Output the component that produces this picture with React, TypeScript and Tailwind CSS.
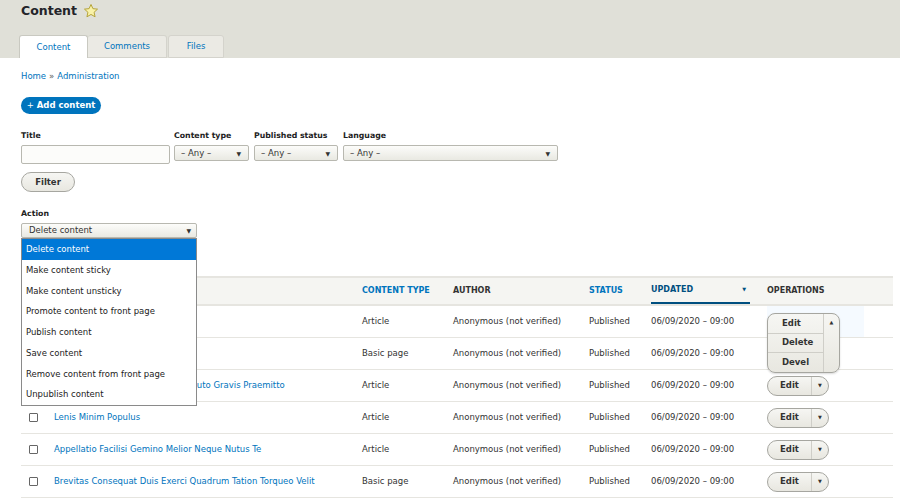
import React from 'react';

const ACTIONS = [
  'Delete content',
  'Make content sticky',
  'Make content unsticky',
  'Promote content to front page',
  'Publish content',
  'Save content',
  'Remove content from front page',
  'Unpublish content',
];

const ROWS = [
  { title: 'Ad Commoveo Minim', type: 'Article', open: true },
  { title: 'Dolor Ideo Pala Sino', type: 'Basic page' },
  { title: 'Conventio Dolus Nisl Quidem Imputo Gravis Praemitto', type: 'Article' },
  { title: 'Lenis Minim Populus', type: 'Article' },
  { title: 'Appellatio Facilisi Gemino Melior Neque Nutus Te', type: 'Article' },
  { title: 'Brevitas Consequat Duis Exerci Quadrum Tation Torqueo Velit', type: 'Basic page' },
];

function Star() {
  return (
    <svg width="16" height="16" viewBox="0 0 24 24" className="ml-[6px]">
      <path
        d="M12 2.2l2.9 6.3 6.9.7-5.2 4.7 1.5 6.8L12 17.2l-6.1 3.5 1.5-6.8-5.2-4.7 6.9-.7z"
        fill="#f9f2a8"
        stroke="#b5a43a"
        strokeWidth="1.5"
        strokeLinejoin="round"
      />
    </svg>
  );
}

function Select({ w, label }: { w: string; label: string }) {
  return (
    <div
      className={`${w} h-[16px] flex items-center justify-between pl-[6px] pr-[7px] border border-[#b8b8b0] rounded-[2px] bg-gradient-to-b from-[#fcfcfa] to-[#e9e9e2] text-[8.5px] text-[#333]`}
    >
      <span>{label}</span>
      <span className="text-[6px] text-[#333]">▼</span>
    </div>
  );
}

function Label({ children }: { children: React.ReactNode }) {
  return <div className="h-[10px] flex items-center text-[7.8px] font-bold text-[#222] mb-[4px]">{children}</div>;
}

export default function App() {
  return (
    <div className="w-[900px] h-[499px] overflow-hidden bg-white relative font-['DejaVu_Sans',sans-serif] text-[#333]">
      {/* page header */}
      <div className="bg-[#e0e0d8] h-[58px] px-[19px] flex flex-col">
        <h1 className="pl-[2px] h-[22px] flex items-center text-[12.5px] font-bold text-[#232429]">
          Content
          <Star />
        </h1>
        <div className="flex mt-auto text-[8.5px] text-[#0074bd]">
          <div className="w-[69px] h-[23px] flex items-center justify-center bg-white border border-b-0 border-[#c9c9c1] rounded-t-[3px]">
            Content
          </div>
          <div className="w-[79px] h-[23px] flex items-center justify-center bg-[#ebeae4] border border-l-0 border-[#d4d3cc] rounded-t-[3px]">
            Comments
          </div>
          <div className="w-[56px] ml-[1px] h-[23px] flex items-center justify-center bg-[#ebeae4] border border-[#d4d3cc] rounded-t-[3px]">
            Files
          </div>
        </div>
      </div>

      <div className="px-[21px]">
        <div className="mt-[12px] h-[12px] flex items-center text-[8.5px] text-[#0074bd]">
          Home <span className="mx-[3px] text-[#555]">»</span> Administration
        </div>

        <button className="mt-[15px] w-[80px] h-[17px] rounded-full bg-[#0074bd] text-white text-[8.5px] font-bold flex items-center justify-center">
          <span className="font-normal mr-[3px]">+</span>Add content
        </button>

        {/* filters */}
        <div className="mt-[17px] flex items-start">
          <div className="mr-[4px]">
            <Label>Title</Label>
            <div className="w-[149px] h-[19px] border border-[#b8b8b0] rounded-[2px] bg-[#fcfcfa]" />
          </div>
          <div className="mr-[5px]">
            <Label>Content type</Label>
            <Select w="w-[75px]" label="– Any –" />
          </div>
          <div className="mr-[5px]">
            <Label>Published status</Label>
            <Select w="w-[84px]" label="– Any –" />
          </div>
          <div>
            <Label>Language</Label>
            <Select w="w-[215px]" label="– Any –" />
          </div>
        </div>

        <button className="mt-[8px] w-[54px] h-[20px] rounded-full border border-[#a6a6a0] bg-gradient-to-b from-[#f6f6f3] to-[#e8e7e0] text-[8.5px] font-bold text-[#333] flex items-center justify-center">
          Filter
        </button>

        {/* action */}
        <div className="mt-[17px]">
          <Label>Action</Label>
          <div className="relative w-[176px]">
            <div className="w-[176px] h-[15px] flex items-center justify-between pl-[7px] pr-[5px] border border-[#b8b8b0] rounded-[2px] bg-gradient-to-b from-[#fcfcfa] to-[#e9e9e2] text-[8.5px] text-[#333]">
              <span>Delete content</span>
              <span className="text-[6px]">▼</span>
            </div>
            <div className="absolute left-0 top-full w-[176px] z-20 bg-white border border-[#8a8a8a] text-[8.5px] text-[#222]">
              {ACTIONS.map((a, i) => (
                <div
                  key={a}
                  className={`h-[20.75px] flex items-center pl-[4px] ${i === 0 ? 'bg-[#0078d7] text-white' : ''}`}
                >
                  {a}
                </div>
              ))}
            </div>
          </div>
        </div>

        {/* table */}
        <table className="mt-[38px] w-[872px] table-fixed border-collapse text-[8.5px]">
          <colgroup>
            <col className="w-[25px]" />
            <col className="w-[308px]" />
            <col className="w-[91px]" />
            <col className="w-[136px]" />
            <col className="w-[62px]" />
            <col className="w-[116px]" />
            <col className="w-[134px]" />
          </colgroup>
          <thead>
            <tr className="h-[28px] bg-[#f5f5f2] border-t-2 border-b-2 border-[#e6e5e0] text-[8px] font-bold text-left">
              <th className="px-[8px]" />
              <th className="px-[8px]" />
              <th className="px-[8px] text-[#0074bd]">CONTENT TYPE</th>
              <th className="px-[8px] text-[#333]">AUTHOR</th>
              <th className="px-[8px] text-[#0074bd]">STATUS</th>
              <th className="px-[8px] h-[28px] p-0">
                <div className="w-[99px] h-[26px] flex items-center justify-between pr-[4px] border-b-2 border-[#004f80] text-[#004f80]">
                  <span>UPDATED</span>
                  <span className="text-[5px]">▼</span>
                </div>
              </th>
              <th className="px-[8px] text-[#333]">OPERATIONS</th>
            </tr>
          </thead>
          <tbody>
            {ROWS.map((r) => (
              <tr key={r.title} className="h-[32px] border-b border-[#e6e5e0]">
                <td className="pl-[8px]">
                  <div className="w-[9px] h-[9px] border border-[#666] rounded-[1px] bg-white" />
                </td>
                <td className="px-[8px] text-[#0074bd] whitespace-nowrap overflow-hidden">{r.title}</td>
                <td className="px-[8px]">{r.type}</td>
                <td className="px-[8px]">Anonymous (not verified)</td>
                <td className="px-[8px]">Published</td>
                <td className="px-[8px]">06/09/2020 – 09:00</td>
                <td className="pl-[8px] relative">
                  {r.open ? (
                    <div className="w-[97px] h-[31px] bg-[#f5faff] relative">
                      <div className="absolute left-0 top-[7px] z-10 w-[73px] flex border border-[#a6a6a0] rounded-[8px] overflow-hidden bg-gradient-to-b from-[#f6f6f3] to-[#e8e7e0] text-[8.5px] font-bold text-[#333] shadow-[0_1px_2px_rgba(0,0,0,0.15)]">
                        <div className="w-[55px] flex flex-col">
                          <div className="h-[19.5px] flex items-center pl-[14px] border-b border-[#cfcec8]">Edit</div>
                          <div className="h-[19.5px] flex items-center pl-[14px] border-b border-[#cfcec8]">Delete</div>
                          <div className="h-[19px] flex items-center pl-[14px]">Devel</div>
                        </div>
                        <div className="flex-1 border-l border-[#cfcec8] flex justify-center pt-[5px] text-[5px] text-[#333]">
                          ▲
                        </div>
                      </div>
                    </div>
                  ) : (
                    <div className="w-[62px] h-[20px] flex border border-[#a6a6a0] rounded-full bg-gradient-to-b from-[#f6f6f3] to-[#e8e7e0] text-[8.5px] font-bold text-[#333]">
                      <div className="w-[43px] flex items-center justify-center">Edit</div>
                      <div className="flex-1 border-l border-[#cfcec8] flex items-center justify-center text-[5px]">▼</div>
                    </div>
                  )}
                </td>
              </tr>
            ))}
          </tbody>
        </table>
      </div>
    </div>
  );
}
